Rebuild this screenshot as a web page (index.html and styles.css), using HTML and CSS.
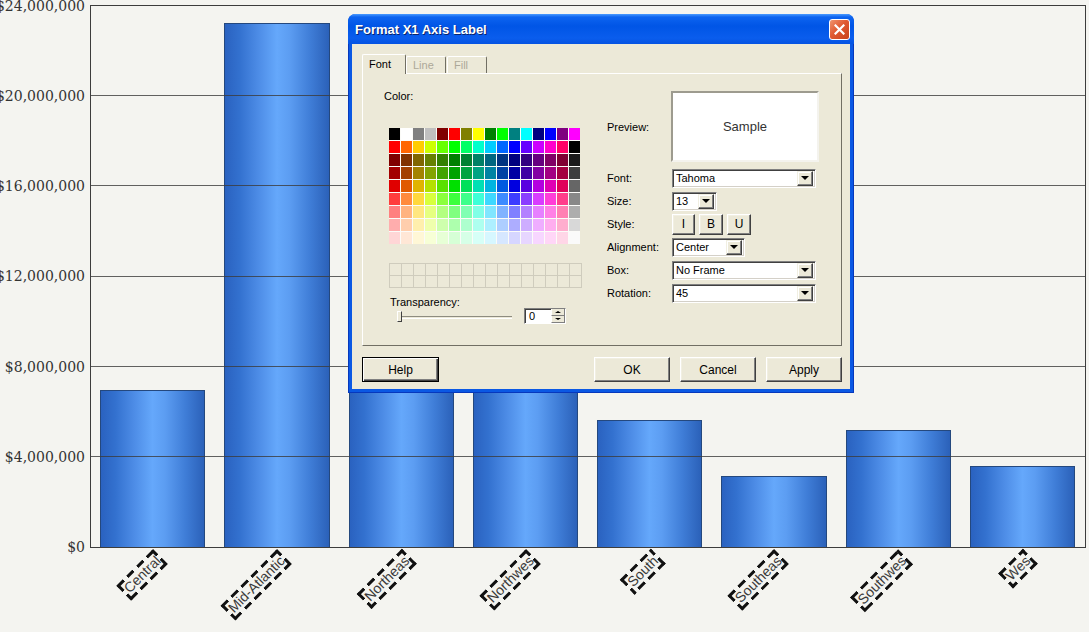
FILE: index.html
```html
<!DOCTYPE html>
<html lang="en">
<head>
  <meta charset="UTF-8">
  <title>Format X1 Axis Label</title>
  <link rel="stylesheet" href="styles.css">
</head>
<body>
<main class="chart">
  <div class="y-axis">
    <span class="y-label">$24,000,000</span>
    <span class="y-label">$20,000,000</span>
    <span class="y-label">$16,000,000</span>
    <span class="y-label">$12,000,000</span>
    <span class="y-label">$8,000,000</span>
    <span class="y-label">$4,000,000</span>
    <span class="y-label">$0</span>
  </div>
  <div id="elePlot" class="plot"></div>
  <div class="corner"></div>
  <div id="eleAxis" class="x-axis"></div>
</main>

<section class="dialog">
  <header class="dialog-title">
    <h1 class="dialog-h">Format X1 Axis Label</h1>
    <span class="dialog-close">
      <svg width="11" height="11" viewBox="0 0 11 11"><path d="M1.5 1.5l8 8M9.5 1.5l-8 8" stroke="#fff" stroke-width="2.2" stroke-linecap="square"/></svg>
    </span>
  </header>
  <div class="dialog-body">
    <nav class="tabs">
      <span class="tab tab-active">Font</span>
      <span class="tab tab-disabled">Line</span>
      <span class="tab tab-disabled">Fill</span>
    </nav>
    <div class="panel">
      <div class="color-col">
        <div class="field-label">Color:</div>
        <div id="elePalette" class="palette"></div>
        <div id="eleCustom" class="palette-custom"></div>
        <div class="field-label field-label-trans">Transparency:</div>
        <div class="trans-row">
          <div class="slider">
            <div class="slider-track"></div>
            <span class="slider-thumb"></span>
          </div>
          <div class="spin">
            <span class="spin-value">0</span>
            <span class="spin-btns">
              <span class="spin-btn"><i class="arrow-up"></i></span>
              <span class="spin-btn"><i class="arrow-down"></i></span>
            </span>
          </div>
        </div>
      </div>
      <div class="form">
        <span class="form-label">Preview:</span>
        <div class="preview">Sample</div>

        <span class="form-label">Font:</span>
        <div class="select select-wide"><span class="select-value">Tahoma</span><span class="select-btn"><i class="arrow-down"></i></span></div>

        <span class="form-label">Size:</span>
        <div class="select select-size"><span class="select-value">13</span><span class="select-btn"><i class="arrow-down"></i></span></div>

        <span class="form-label">Style:</span>
        <div class="style-btns">
          <span class="style-btn">I</span>
          <span class="style-btn">B</span>
          <span class="style-btn">U</span>
        </div>

        <span class="form-label">Alignment:</span>
        <div class="select select-align"><span class="select-value">Center</span><span class="select-btn"><i class="arrow-down"></i></span></div>

        <span class="form-label">Box:</span>
        <div class="select select-wide"><span class="select-value">No Frame</span><span class="select-btn"><i class="arrow-down"></i></span></div>

        <span class="form-label">Rotation:</span>
        <div class="select select-wide"><span class="select-value">45</span><span class="select-btn"><i class="arrow-down"></i></span></div>
      </div>
    </div>
    <footer class="buttons">
      <span class="btn btn-default">Help</span>
      <span class="buttons-fill"></span>
      <span class="btn">OK</span>
      <span class="btn">Cancel</span>
      <span class="btn">Apply</span>
    </footer>
  </div>
</section>

<script>
  // bars
  var MAX = 24000000;
  var PLOT_H = 541;
  var data = [
    { name: 'Central', tag: 'Central', value: 6960000 },
    { name: 'Mid-Atlantic', tag: 'Mid-Atlantic', value: 23250000 },
    { name: 'Northeast', tag: 'Northeas', value: 7450000 },
    { name: 'Northwest', tag: 'Northwes', value: 7900000 },
    { name: 'South', tag: 'South', value: 5630000 },
    { name: 'Southeast', tag: 'Southeas', value: 3150000 },
    { name: 'Southwest', tag: 'Southwes', value: 5190000 },
    { name: 'West', tag: 'Wes', value: 3590000 }
  ];
  var barsHtml = '';
  var axisHtml = '';
  data.forEach(function (item) {
    var h = Math.round(item.value / MAX * PLOT_H);
    barsHtml += '<div class="bar" title="' + item.name + '" style="height:' + h + 'px"></div>';
    axisHtml += '<div class="x-cell"><span class="x-label">' + item.tag + '</span></div>';
  });
  elePlot.innerHTML = barsHtml;
  eleAxis.innerHTML = axisHtml;

  // colour palette
  var basic = ['#000', '#fff', '#808080', '#c0c0c0', '#800000', '#f00', '#808000', '#ff0',
    '#008000', '#0f0', '#008080', '#0ff', '#000080', '#00f', '#800080', '#f0f'];
  var hues = [0, 24, 48, 72, 96, 120, 144, 168, 192, 216, 240, 264, 288, 312, 336];
  var shades = [[50, '#000'], [25, '#1a1a1a'], [32, '#3e3e3e'], [44, '#666'], [62, '#888'],
    [75, '#adadad'], [84, '#d8d8d8'], [92, '#fafafa']];
  function cell(c) {
    return '<span class="swatch" style="background-color:' + c + '"></span>';
  }
  var paletteHtml = '';
  basic.forEach(function (c) { paletteHtml += cell(c); });
  shades.forEach(function (s) {
    hues.forEach(function (h) {
      paletteHtml += cell('hsl(' + h + ',100%,' + s[0] + '%)');
    });
    paletteHtml += cell(s[1]);
  });
  elePalette.innerHTML = paletteHtml;
  eleCustom.innerHTML = new Array(33).join('<span class="swatch-empty"></span>');
</script>
</body>
</html>
```

FILE: styles.css
```css
body {
  margin: 0;
  height: 100vh;
  overflow: hidden;
  position: relative;
  background-color: #f4f4f0;
  font-family: "Liberation Sans", Arial, sans-serif;
}
/* chart */
.chart {
  display: grid;
  grid-template-columns: 90px 996px;
  grid-template-rows: 543px auto;
  padding-top: 5px;
}
.y-axis {
  display: flex;
  flex-direction: column;
  justify-content: space-between;
  align-items: flex-end;
  padding-right: 5px;
  font: 14px "DejaVu Serif", serif;
  color: #333;
}
.y-label {
  height: 1px;
  display: flex;
  align-items: center;
  white-space: nowrap;
}
.plot {
  position: relative;
  display: grid;
  grid-template-columns: repeat(8, 1fr);
  align-items: end;
  border: 1px solid #3c3c3c;
  box-sizing: border-box;
}
.plot::after {
  content: '';
  position: absolute;
  left: 0; right: 0; top: 0; bottom: 0;
  pointer-events: none;
  background:
    linear-gradient(#3c3c3c, #3c3c3c) no-repeat 0 89px,
    linear-gradient(#3c3c3c, #3c3c3c) no-repeat 0 179px,
    linear-gradient(#3c3c3c, #3c3c3c) no-repeat 0 270px,
    linear-gradient(#3c3c3c, #3c3c3c) no-repeat 0 360px,
    linear-gradient(#3c3c3c, #3c3c3c) no-repeat 0 450px;
  background-size: 100% 1px;
  opacity: .8;
}
.bar {
  margin: 0 10px 0 9px;
  box-sizing: border-box;
  border: 1px solid #24487e;
  border-bottom: 0;
  background: linear-gradient(to right, #2a62c0 0%, #3371cf 14%, #4d8ce6 32%, #65a8fb 50%, #5c9df2 62%, #3f7dd7 82%, #2b61b9 100%);
}
.x-axis {
  grid-column: 2;
  display: grid;
  grid-template-columns: repeat(8, 1fr);
  padding: 1px 1px 0;
}
.x-cell {
  display: flex;
  justify-content: flex-end;
  padding-right: 50%;
}
/* selected label: long black dashes drawn as four background strips */
.x-label {
  flex-shrink: 0;
  white-space: nowrap;
  font: 14px/15px "Liberation Sans", Arial, sans-serif;
  color: #3a3a3a;
  padding: 3px 3px 3px 4px;
  background:
    repeating-linear-gradient(to right, #111 0 9px, transparent 9px 14px) no-repeat 0 0 / 100% 3px,
    repeating-linear-gradient(to left, #111 0 9px, transparent 9px 14px) no-repeat 0 100% / 100% 3px,
    repeating-linear-gradient(to bottom, #111 0 9px, transparent 9px 14px) no-repeat 0 0 / 3px 100%,
    repeating-linear-gradient(to top, #111 0 9px, transparent 9px 14px) no-repeat 100% 0 / 3px 100%;
  transform-origin: 100% 0;
  transform: rotate(-45deg);
}
/* dialog */
.dialog {
  position: absolute;
  left: 348px;
  top: 14px;
  width: 506px;
  height: 379px;
  box-sizing: border-box;
  display: flex;
  flex-direction: column;
  background-color: #0a58e4;
  border: 1px solid #0638bd;
  border-top: 0;
  border-radius: 8px 8px 0 0;
  font-size: 11px;
  color: #000;
}
.dialog-title {
  flex: none;
  height: 30px;
  display: flex;
  align-items: center;
  padding: 0 4px 0 7px;
  margin: 0 -1px;
  border-radius: 7px 7px 0 0;
  background: linear-gradient(#4a9bff 0, #0d64f0 3px, #0055e6 40%, #0a5ded 80%, #0553e2 100%);
}
.dialog-h {
  margin: 0;
  flex-grow: 1;
  font-size: 13px;
  font-weight: bold;
  color: #fff;
  text-shadow: 1px 1px #0a246a;
}
.dialog-close {
  width: 21px;
  height: 21px;
  box-sizing: border-box;
  display: flex;
  align-items: center;
  justify-content: center;
  border: 1px solid #fff;
  border-radius: 3px;
  background: linear-gradient(135deg, #f0946f, #e05a32 45%, #c8421c);
}
.dialog-body {
  flex-grow: 1;
  margin: 0 3px 3px;
  padding: 10px 8px 7px 10px;
  display: flex;
  flex-direction: column;
  background-color: #ece9d8;
}
.tabs {
  display: flex;
  align-items: flex-end;
  height: 19px;
  padding-left: 1px;
  position: relative;
  z-index: 1;
}
.tab {
  width: 40px;
  height: 17px;
  box-sizing: border-box;
  padding-left: 6px;
  line-height: 16px;
  border: 1px solid;
  border-color: #fff #716f64 transparent #fff;
  border-bottom: 0;
  border-radius: 2px 2px 0 0;
  margin-right: 1px;
}
.tab-active {
  width: 44px;
  height: 20px;
  margin: 0 0 -1px -1px;
  background-color: #ece9d8;
  line-height: 19px;
}
.tab-disabled {
  color: #aca899;
}
.panel {
  height: 273px;
  box-sizing: border-box;
  display: flex;
  border: 1px solid;
  border-color: #fff #716f64 #716f64 #fff;
}
.color-col {
  width: 223px;
  padding: 16px 0 0 21px;
}
.field-label {
  line-height: 13px;
}
.palette {
  display: grid;
  grid-template-columns: repeat(16, 11px);
  grid-auto-rows: 12px;
  gap: 1px;
  width: 191px;
  margin: 25px 0 0 5px;
  background-color: #fbfbf8;
}
.palette-custom {
  display: grid;
  grid-template-columns: repeat(16, 12px);
  grid-auto-rows: 12px;
  width: 192px;
  margin: 19px 0 0 5px;
  border-top: 1px solid #cfccbd;
  border-left: 1px solid #cfccbd;
}
.swatch-empty {
  border-right: 1px solid #cfccbd;
  border-bottom: 1px solid #cfccbd;
}
.field-label-trans {
  margin: 8px 0 0 6px;
}
.trans-row {
  display: flex;
  align-items: center;
  height: 16px;
  margin: -1px 0 0 6px;
}
.slider {
  position: relative;
  width: 114px;
  margin-left: 8px;
  height: 16px;
  display: flex;
  align-items: center;
}
.slider-track {
  flex-grow: 1;
  height: 1px;
  margin-top: 2px;
  border-top: 1px solid #8e8c80;
  border-bottom: 1px solid #fff;
}
.slider-thumb {
  position: absolute;
  left: -1px;
  top: 3px;
  width: 5px;
  height: 11px;
  box-sizing: border-box;
  background-color: #ece9d8;
  border: 1px solid;
  border-color: #fff #404040 #404040 #fff;
}
.spin {
  margin-left: 12px;
  width: 42px;
  height: 16px;
  box-sizing: border-box;
  display: flex;
  background-color: #fff;
  border: 1px solid;
  border-color: #808080 #fff #fff #808080;
  box-shadow: inset 1px 1px #404040;
}
.spin-value {
  flex-grow: 1;
  padding: 1px 0 0 4px;
  line-height: 12px;
}
.spin-btns {
  display: flex;
  flex-direction: column;
  width: 14px;
}
.spin-btn {
  flex: 1;
  display: flex;
  align-items: center;
  justify-content: center;
  background-color: #ece9d8;
  border-left: 1px solid #fff;
  border-right: 1px solid #808080;
  border-bottom: 1px solid #808080;
}
.arrow-up,
.arrow-down {
  width: 0;
  height: 0;
  border-left: 3px solid transparent;
  border-right: 3px solid transparent;
}
.arrow-up {
  border-bottom: 2px solid #000;
}
.arrow-down {
  border-top: 2px solid #000;
}
.form {
  display: grid;
  grid-template-columns: 65px 147px;
  grid-template-rows: 73px;
  grid-auto-rows: 18px;
  row-gap: 5px;
  align-items: center;
  padding-top: 17px;
}
.form-label {
  line-height: 13px;
}
.preview {
  align-self: start;
  height: 71px;
  box-sizing: border-box;
  margin-left: -1px;
  display: flex;
  align-items: center;
  justify-content: center;
  background-color: #fff;
  border: 2px solid;
  border-color: #9d9b8f #f4f3ee #f4f3ee #9d9b8f;
  font-size: 13px;
  color: #333;
}
.select {
  height: 19px;
  box-sizing: border-box;
  display: flex;
  align-items: center;
  background-color: #fff;
  border: 1px solid;
  border-color: #808080 #fff #fff #808080;
  box-shadow: inset 1px 1px #404040, inset -1px -1px #d4d0c8;
  padding: 0 2px 0 3px;
}
.select-wide { width: 144px; }
.select-size { width: 45px; }
.select-align { width: 73px; }
.select-value {
  flex-grow: 1;
}
.select-btn {
  width: 16px;
  height: 15px;
  box-sizing: border-box;
  display: flex;
  align-items: center;
  justify-content: center;
  background-color: #ece9d8;
  border: 1px solid;
  border-color: #f1efe2 #404040 #404040 #f1efe2;
  box-shadow: inset -1px -1px #808080, inset 1px 1px #fff;
}
.select-btn .arrow-down {
  border-left-width: 4px;
  border-right-width: 4px;
  border-top-width: 4px;
}
.style-btns {
  display: flex;
  gap: 4px;
}
.style-btn {
  width: 23px;
  height: 21px;
  box-sizing: border-box;
  display: flex;
  align-items: center;
  justify-content: center;
  font-size: 12px;
  background-color: #ece9d8;
  border: 1px solid;
  border-color: #fff #404040 #404040 #fff;
  box-shadow: inset -1px -1px #808080, inset 1px 1px #f1efe2;
}
.style-btn + .style-btn { width: 24px; }
.buttons {
  display: flex;
  gap: 10px;
  margin-top: 11px;
}
.buttons-fill {
  flex-grow: 1;
}
.btn {
  width: 76px;
  height: 25px;
  box-sizing: border-box;
  display: flex;
  align-items: center;
  justify-content: center;
  font-size: 12px;
  background-color: #ece9d8;
  border: 1px solid;
  border-color: #fff #404040 #404040 #fff;
  box-shadow: inset -1px -1px #808080, inset 1px 1px #f1efe2;
}
.btn-default {
  width: 77px;
  border-color: #000;
  box-shadow: inset 1px 1px #fff, inset -1px -1px #404040, inset -2px -2px #808080;
}
```
